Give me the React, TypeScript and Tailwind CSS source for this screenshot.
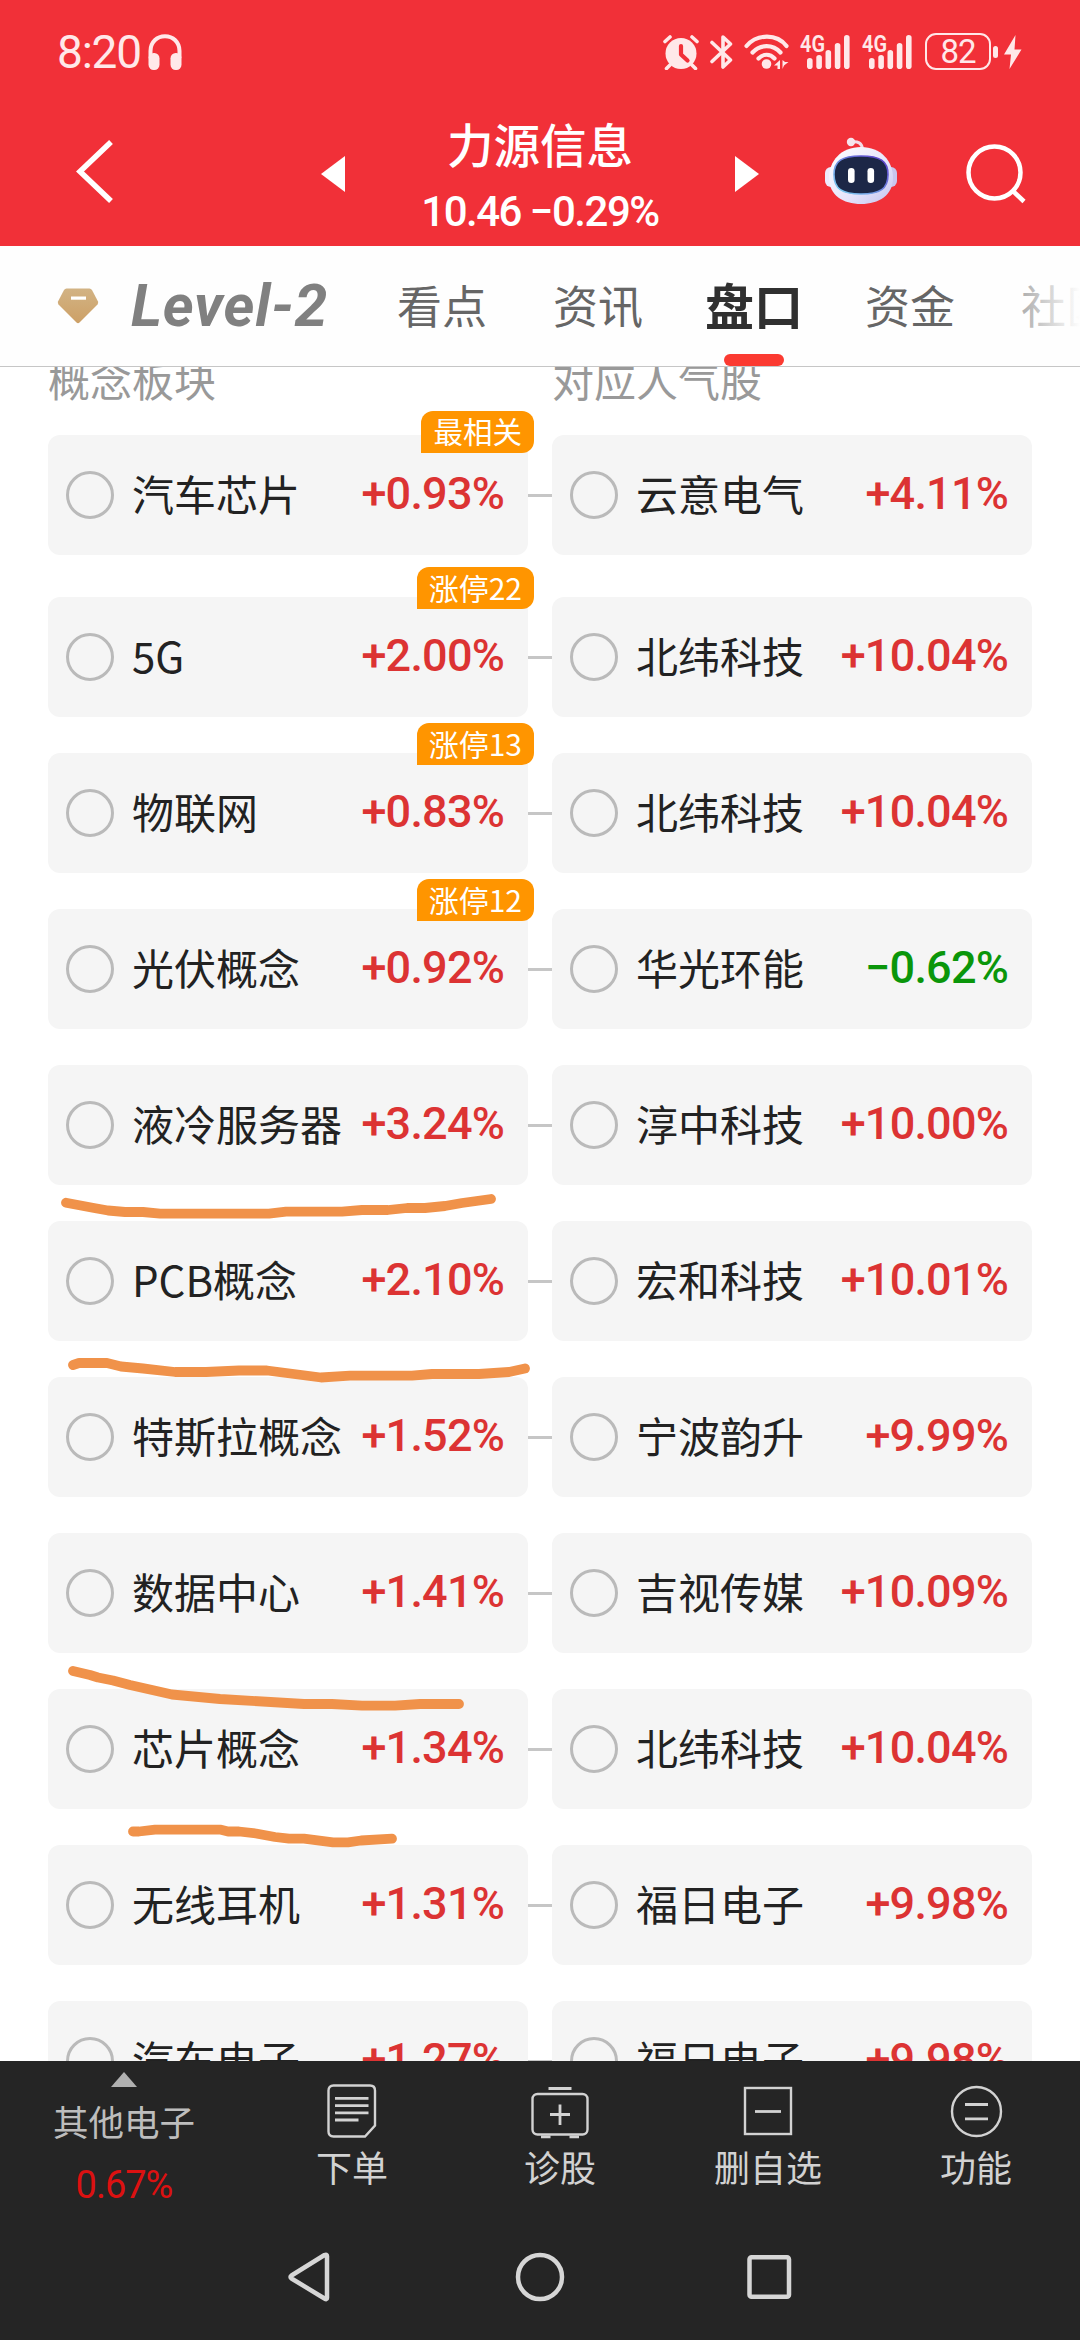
import clsx from "clsx";

interface Quote {
  name: string;
  change: string;
}

interface ConceptRow {
  concept: Quote;
  stock: Quote;
  badge?: string;
}

const rows: ConceptRow[] = [
  { concept: { name: "汽车芯片", change: "+0.93%" }, stock: { name: "云意电气", change: "+4.11%" }, badge: "最相关" },
  { concept: { name: "5G", change: "+2.00%" }, stock: { name: "北纬科技", change: "+10.04%" }, badge: "涨停22" },
  { concept: { name: "物联网", change: "+0.83%" }, stock: { name: "北纬科技", change: "+10.04%" }, badge: "涨停13" },
  { concept: { name: "光伏概念", change: "+0.92%" }, stock: { name: "华光环能", change: "−0.62%" }, badge: "涨停12" },
  { concept: { name: "液冷服务器", change: "+3.24%" }, stock: { name: "淳中科技", change: "+10.00%" } },
  { concept: { name: "PCB概念", change: "+2.10%" }, stock: { name: "宏和科技", change: "+10.01%" } },
  { concept: { name: "特斯拉概念", change: "+1.52%" }, stock: { name: "宁波韵升", change: "+9.99%" } },
  { concept: { name: "数据中心", change: "+1.41%" }, stock: { name: "吉视传媒", change: "+10.09%" } },
  { concept: { name: "芯片概念", change: "+1.34%" }, stock: { name: "北纬科技", change: "+10.04%" } },
  { concept: { name: "无线耳机", change: "+1.31%" }, stock: { name: "福日电子", change: "+9.98%" } },
  { concept: { name: "汽车电子", change: "+1.27%" }, stock: { name: "福日电子", change: "+9.98%" } },
];

const tabs = ["看点", "资讯", "盘口", "资金", "社区"];

function Signal() {
  return (
    <svg width="51" height="36" viewBox="0 0 51 36" fill="currentColor" className="overflow-visible">
      <text x="0" y="17.500" fontSize="23" fontWeight="600" textLength="25" lengthAdjust="spacingAndGlyphs" fontFamily="Roboto, sans-serif">4G</text>
      <rect x="7" y="24" width="5.6" height="11" rx="2.8" />
      <rect x="16.3" y="21" width="5.6" height="14" rx="2.8" />
      <rect x="25.5" y="16" width="5.6" height="19" rx="2.8" />
      <rect x="34.8" y="9" width="5.6" height="26" rx="2.8" />
      <rect x="44" y="1" width="5.6" height="34" rx="2.8" />
    </svg>
  );
}

function StatusBar() {
  return (
    <div className="flex h-[103px] items-center pl-[57px] pr-[57px] text-[#ffe8e9]">
      <span className="w-[91px] font-[Roboto,sans-serif] text-[46px] leading-none tracking-[-1.2px]">8:20</span>
      <svg width="34" height="36" viewBox="0 0 34 36" className="mr-auto">
        <path d="M2.5 24V17C2.5 8 9 2.2 17 2.2S31.500 8 31.500 17V24" fill="none" stroke="currentColor" strokeWidth="4" />
        <rect x="0.500" y="19" width="11" height="17" rx="5.200" fill="currentColor" />
        <rect x="22.500" y="19" width="11" height="17" rx="5.200" fill="currentColor" />
      </svg>
      <svg width="38" height="36" viewBox="0 0 38 36">
        <circle cx="19" cy="19.500" r="15.500" fill="currentColor" />
        <g fill="none" strokeLinecap="round" strokeLinejoin="round">
          <path d="M3 7.500L8 3M30 3l5 4.500M8 31l-3.500 3.500M30 31l3.500 3.500" stroke="currentColor" strokeWidth="3.600" />
          <path d="M19 12v8.500l6.500 6" stroke="#f13038" strokeWidth="4.200" />
        </g>
      </svg>
      <svg width="24" height="36" viewBox="0 0 24 36" className="ml-[10px]" fill="none" stroke="currentColor" strokeWidth="3.600" strokeLinecap="round" strokeLinejoin="round">
        <path d="M2 8.500L20.500 26L13 33V3l7.500 7L2 27.500" />
      </svg>
      <svg width="46" height="36" viewBox="0 0 46 36" className="ml-[10px]" fill="none" stroke="currentColor" strokeWidth="4.200" strokeLinecap="round">
        <path d="M2.500 12C13 -0.500 33 -0.500 42.500 12" />
        <path d="M8.500 18.500C16 10 29 10 36.500 18.500" />
        <path d="M14.500 24.500C19.500 19.500 26 19.500 30.500 24.500" />
        <circle cx="22.500" cy="30" r="4.800" fill="currentColor" stroke="none" />
        <path d="M36 26v9h-2.500v-3.500H30zM38.500 26v9l1.500-3.500 4.500-3.500h-3.500z" fill="currentColor" stroke="none" />
      </svg>
      <div className="ml-[10px] flex gap-[11px]">
        <Signal />
        <Signal />
      </div>
      <div className="ml-[12px] flex h-[37px] w-[66px] items-center justify-center rounded-[11px] border-[2.500px] border-[#ffe8e9] font-[Roboto,sans-serif] text-[33px] leading-none tracking-[-1px]">
        82
      </div>
      <div className="ml-[2px] h-[12px] w-[5px] rounded-[3px] bg-[#ffe8e9]" />
      <svg width="20" height="36" viewBox="0 0 20 36" className="ml-[5px]" fill="currentColor">
        <path d="M12.500 1L1 20.500h7L6.500 35L18.500 15.500H11.500z" />
      </svg>
    </div>
  );
}

function Robot() {
  return (
    <svg width="74" height="68" viewBox="0 0 74 68">
      <defs>
        <linearGradient id="shell" x1="0" y1="0" x2="1" y2="1">
          <stop offset="0" stopColor="#ffffff" />
          <stop offset="0.600" stopColor="#e6e4fb" />
          <stop offset="1" stopColor="#c3c3ee" />
        </linearGradient>
        <linearGradient id="rim" x1="0" y1="1" x2="1" y2="0">
          <stop offset="0" stopColor="#7fd8f5" />
          <stop offset="1" stopColor="#5a35c8" />
        </linearGradient>
      </defs>
      <path d="M27 5c7-1 11 1 11.500 7" fill="none" stroke="#f3dce8" strokeWidth="3" />
      <circle cx="27" cy="5" r="4.200" fill="#f6e4ec" />
      <rect x="1" y="30" width="12" height="20" rx="6" fill="#eeeafc" />
      <rect x="61" y="30" width="12" height="20" rx="6" fill="#c9c6ee" />
      <path d="M37 10C57 10 69 24 69 41C69 58 55 67 37 67S5 58 5 41C5 24 17 10 37 10z" fill="url(#shell)" />
      <path d="M37 19C56 19 64 24 64 37.500C64 52 56 57 37 57S10 52 10 37.500C10 24 18 19 37 19z" fill="#1c2747" stroke="url(#rim)" strokeWidth="1.600" />
      <rect x="24" y="31" width="6.600" height="15" rx="3.300" fill="#fff" />
      <rect x="43.500" y="31" width="6.600" height="15" rx="3.300" fill="#fff" />
    </svg>
  );
}

function TitleBar() {
  return (
    <div className="flex h-[143px] pl-[74px] pr-[53px] text-white">
      <svg width="40" height="66" viewBox="0 0 40 66" className="mt-[35px]" fill="none" stroke="currentColor" strokeWidth="5.500">
        <path d="M37 4L6 33.500L37 63" />
      </svg>
      <svg width="24" height="36" viewBox="0 0 24 36" className="ml-[207px] mt-[53px]" fill="currentColor">
        <path d="M24 0V36L0 18z" />
      </svg>
      <div className="flex w-[390px] flex-col items-center pt-[17px]">
        <span className="text-[46.500px] font-medium leading-[46px]">力源信息</span>
        <span className="mt-[25px] whitespace-pre font-[Roboto,sans-serif] text-[42px] font-medium leading-[42px] tracking-[-1.500px]">10.46 −0.29%</span>
      </div>
      <svg width="24" height="36" viewBox="0 0 24 36" className="mt-[53px]" fill="currentColor">
        <path d="M0 0V36L24 18z" />
      </svg>
      <div className="ml-[65px] mt-[34px]">
        <Robot />
      </div>
      <svg width="62" height="62" viewBox="0 0 62 62" className="ml-auto mt-[40px]" fill="none" stroke="currentColor" strokeWidth="4.500">
        <circle cx="29.500" cy="29.500" r="26" />
        <path d="M48.500 48.500L59 58.500" />
      </svg>
    </div>
  );
}

function TabBar() {
  return (
    <div className="relative flex h-[121px] shrink-0 overflow-hidden border-b border-[#c6c6c6] bg-[#fefefe]">
      <svg width="42" height="36" viewBox="0 0 42 36" className="ml-[57px] mt-[42px] shrink-0">
        <defs>
          <linearGradient id="gem" x1="0" y1="0" x2="0" y2="1">
            <stop offset="0" stopColor="#d2b384" />
            <stop offset="1" stopColor="#cda066" />
          </linearGradient>
        </defs>
        <path d="M9.500 0.500H32.500Q34 0.500 35 2L41 13.500Q41.500 15 40.500 16.500L22.500 34.500Q21 36 19.500 34.500L1.500 16.500Q0.500 15 1 13.500L7 2Q8 0.500 9.500 0.500z" fill="url(#gem)" />
        <rect x="14" y="8.500" width="15" height="3.200" fill="#fff" />
      </svg>
      <span className="ml-[32px] w-[233px] shrink-0 whitespace-nowrap pt-[30px] font-[Roboto,sans-serif] text-[59px] font-bold italic leading-[60px] tracking-[0.800px] text-[#808080]">
        Level-2
      </span>
      {tabs.map((tab) => {
        const active = tab === "盘口";
        return (
          <div key={tab} className="flex h-[120px] w-[156px] shrink-0 flex-col items-center justify-between">
            <span
              className={clsx(
                "whitespace-nowrap",
                active ? "text-[49px] font-bold leading-[116px] text-[#303030]" : "text-[45px] leading-[117px] text-[#666]"
              )}
            >
              {tab}
            </span>
            {active && <div className="-mt-3 h-3 w-[60px] shrink-0 rounded-full bg-[#fb3a31]" />}
          </div>
        );
      })}
      <div className="absolute right-0 top-0 h-[120px] w-[90px] bg-gradient-to-r from-[#fefefe]/20 to-[#fefefe]" />
    </div>
  );
}

function QuoteCard({ quote, badge, first }: { quote: Quote; badge?: string; first?: boolean }) {
  return (
    <div className="relative flex h-[120px] w-[480px] items-center rounded-xl bg-[#f5f5f5] pl-[18px] pr-[24px]">
      <div className="size-[48px] rounded-full border-[3px] border-[#bababa]" />
      <span className="ml-[18px] pb-[4px] text-[42px] leading-none text-[#222]">{quote.name}</span>
      <span
        className={clsx(
          "ml-auto pb-[3px] font-[Roboto,sans-serif] text-[45px] font-medium leading-none tracking-[-0.800px]",
          quote.change.startsWith("+") ? "text-[#dc3333]" : "text-[#0a960a]"
        )}
      >
        {quote.change}
      </span>
      {badge && (
        <span
          className={clsx(
            "absolute right-[-6px] flex h-[42px] items-center rounded-xl rounded-bl-none bg-[#ff9500] px-[12px] pb-[2px] leading-none text-white",
            first ? "top-[-24px] text-[29.500px]" : "top-[-30px] text-[30px]"
          )}
        >
          {badge}
        </span>
      )}
    </div>
  );
}

function ConceptList() {
  return (
    <div className="flex h-[1694px] shrink-0 flex-col overflow-hidden px-[48px]">
      <div className="-mt-[9px] flex shrink-0 gap-[24px] text-[42px] leading-[42px] text-[#999]">
        <span className="w-[480px]">概念板块</span>
        <span className="w-[480px]">对应人气股</span>
      </div>
      <div className="mt-[35px] flex flex-col gap-[36px]">
        {rows.map((row, i) => (
          <div key={i} className={clsx("flex shrink-0 items-center", i === 0 && "mb-[6px]")}>
            <QuoteCard quote={row.concept} badge={row.badge} first={i === 0} />
            <div className="h-[3px] w-[24px] bg-[#c6c6c6]" />
            <QuoteCard quote={row.stock} />
          </div>
        ))}
      </div>
    </div>
  );
}

// Hand drawn marks over the list
function PenMarks() {
  return (
    <svg
      width="1080"
      height="2340"
      viewBox="0 0 1080 2340"
      className="pointer-events-none absolute left-0 top-0"
      fill="none"
      stroke="#f0924a"
      strokeWidth="9.800"
      strokeLinecap="round"
      strokeLinejoin="round"
    >
      <path d="M66 1202.700L94 1208L108 1210.500L125 1212H143L160 1213.700H269L286 1211.700H342L362 1210H388L407 1208H425L445 1206L462 1203L491 1199" />
      <path d="M73 1365L79 1363H107L121 1366.500L143 1368.500L175 1372H206L239 1370.500H267L321 1377.500L350 1375.700H412L432 1374H479L509 1372L525 1368.500" />
      <path d="M73 1671L90 1675L98 1677.500L113 1680.500L130 1685L172 1694.500L220 1699L304 1704H332L362 1705.700H395L420 1704H459" />
      <path d="M133 1831.500H139L155 1829.700H221L228 1831.500H239L256 1833.500L275 1837L289 1838.700H304L333 1842.300H348L361 1840.500L392 1838.700" />
    </svg>
  );
}

const actions = [
  {
    label: "下单",
    icon: (
      <>
        <path d="M11.500 3.500H48Q53 3.500 53 8.500V43.500L43 54.500H11.500Q6.500 54.500 6.500 49.500V8.500Q6.500 3.500 11.500 3.500z" />
        <path d="M13 16.300H46.500M13 23.600H46.500M13 30.900H46.500M13 38H36.500" strokeWidth="2.800" />
      </>
    ),
  },
  {
    label: "诊股",
    icon: (
      <>
        <rect x="2.500" y="12" width="55" height="40.500" rx="5" />
        <path d="M18.500 6.500H41.500M20 32.500H40M30 22.500V43M11 54.800H20.500M39.500 54.800H49" strokeWidth="2.800" />
      </>
    ),
  },
  {
    label: "删自选",
    icon: (
      <>
        <rect x="7" y="6" width="46" height="46" />
        <path d="M17 29.500H43" strokeWidth="2.800" />
      </>
    ),
  },
  {
    label: "功能",
    icon: (
      <>
        <circle cx="30.500" cy="29.500" r="24.500" />
        <path d="M19 22.500H42M19 36.800H42" strokeWidth="2.800" />
      </>
    ),
  },
];

function BottomBar() {
  return (
    <div className="h-[279px] shrink-0 bg-[#252525] text-[#d2d2d2]">
      <div className="flex h-[150px] text-[36px] leading-[36px]">
        <div className="flex w-[248px] flex-col items-center pt-[11px] text-[#bdbdbd]">
          <svg width="26" height="15" viewBox="0 0 26 15" fill="#b0b0b0">
            <path d="M13 0L26 15H0z" />
          </svg>
          <span className="mt-[16px] text-[35.500px]">其他电子</span>
          <span className="mt-[28px] font-[Roboto,sans-serif] text-[38px] tracking-[-1px] text-[#dc1111]">0.67%</span>
        </div>
        {actions.map((action) => (
          <div key={action.label} className="flex w-[208px] flex-col items-center pt-[21px]">
            <svg width="60" height="58" viewBox="0 0 60 58" fill="none" stroke="currentColor" strokeWidth="2.400">
              {action.icon}
            </svg>
            <span className="mt-[8px]">{action.label}</span>
          </div>
        ))}
      </div>
      <div className="flex justify-center pt-[39px]">
        <svg width="504" height="54" viewBox="288 2250 504 54" fill="none" stroke="#d6d6d6" strokeWidth="4.500" strokeLinejoin="round">
          <path d="M327 2256V2298Q327 2300 324.500 2298.500L291.500 2278.500Q289.500 2277 291.500 2275.500L324.500 2255Q327 2254 327 2256z" />
          <circle cx="540" cy="2277" r="22" />
          <rect x="749.500" y="2257.200" width="39.500" height="39.500" rx="2" />
        </svg>
      </div>
    </div>
  );
}

export default function App() {
  return (
    <div className="relative flex h-[2340px] w-[1080px] flex-col overflow-hidden bg-white font-['Noto_Sans_CJK_SC',sans-serif]">
      <div className="h-[246px] shrink-0 bg-[#f13038]">
        <StatusBar />
        <TitleBar />
      </div>
      <TabBar />
      <ConceptList />
      <BottomBar />
      <PenMarks />
    </div>
  );
}
